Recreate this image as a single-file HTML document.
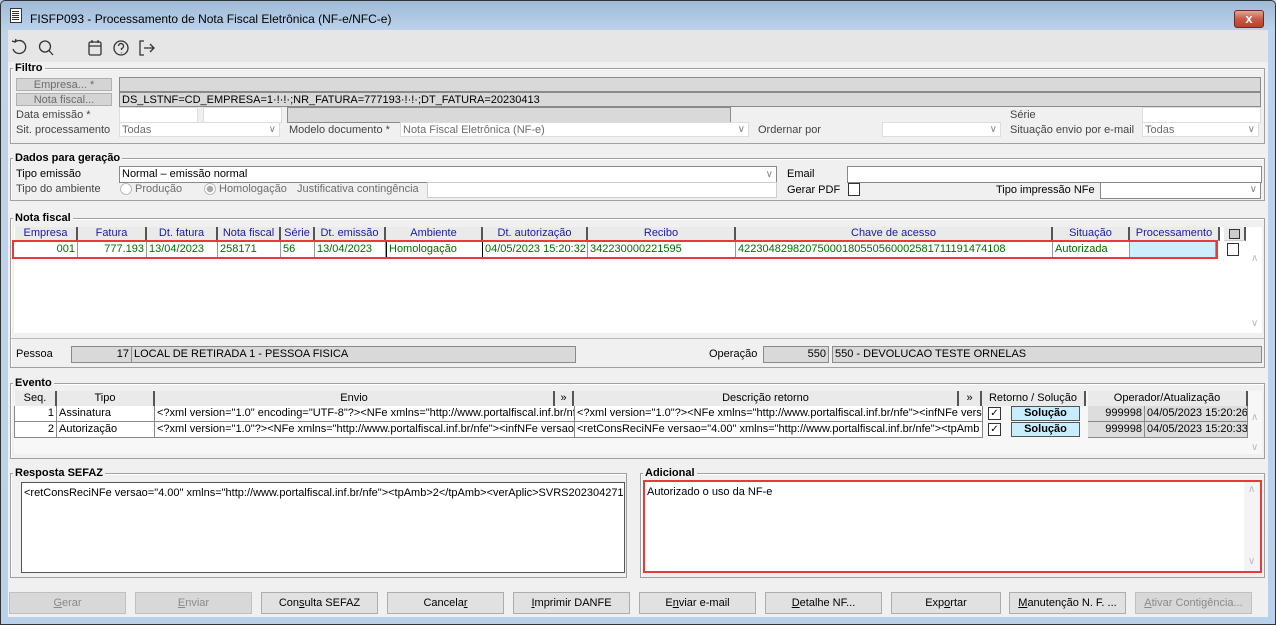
<!DOCTYPE html>
<html><head><meta charset="utf-8"><style>
*{box-sizing:border-box;margin:0;padding:0}
body{width:1276px;height:625px;position:relative;overflow:hidden;background:#b9d1ea;font-family:"Liberation Sans",Arial,sans-serif;font-size:11px;color:#000}
.a{position:absolute;white-space:nowrap;overflow:hidden}
.lbl{color:#444}
.dis{color:#6d6d6d}
.grp{position:absolute;border:1px solid #a0a0a0;box-shadow:inset 1px 1px 0 #fff}
.gt{position:absolute;font-weight:bold;background:#f0f0f0;padding:0 2px;line-height:12px}
.fld{position:absolute;border:1px solid #a0a0a0;background:#fff;line-height:14px;padding-left:2px;white-space:nowrap;overflow:hidden}
.gray{background:#d9d9d9;border-color:#8a8a8a}
.sel::after{content:"\2228";position:absolute;right:3px;top:0;color:#888;font-size:10px}
.btn{position:absolute;border:1px solid #adadad;background:#e1e1e1;text-align:center;line-height:20px;top:592px;height:22px;width:117px}
.btn.d{color:#8a8a8a;background:#d8d8d8;border-color:#c0c0c0}
.hd{position:absolute;background:#eaeaea;border-right:2px solid #555;border-bottom:1px solid #ccc;text-align:center;color:#1a1aa0;line-height:13px;height:14px;overflow:hidden}
.c{position:absolute;border-right:1px solid #999;border-bottom:1px solid #999;line-height:17px;height:17px;padding:0 2px;color:#007000;overflow:hidden;white-space:nowrap;background:#fff}
.eh{position:absolute;background:#eaeaea;border-right:2px solid #555;text-align:center;line-height:14px;height:15px;overflow:hidden;top:391px}
.ec{position:absolute;border-right:1px solid #888;border-bottom:1px solid #888;line-height:15px;height:16px;padding:0 2px;overflow:hidden;white-space:nowrap;background:#fff}
.sb{position:absolute;color:#bbb;font-size:10px}
</style></head><body>
<div class="a" style="left:0;top:0;width:1276px;height:625px;border:1px solid #333;border-radius:5px 5px 0 0;background:linear-gradient(#9fbbd9,#bcd3ea 30px,#b9d1ea)"></div>
<div class="a" style="left:10px;top:8px;width:12px;height:15px;border:1px solid #333;background:#fff"></div>
<div class="a" style="left:12px;top:11px;width:7px;height:9px;background:repeating-linear-gradient(#333 0 1px,#fff 1px 2px)"></div>
<div class="a" style="left:30px;top:12px;font-size:12px">FISFP093 - Processamento de Nota Fiscal Eletrônica (NF-e/NFC-e)</div>
<div class="a" style="left:1234px;top:10px;width:30px;height:18px;border:1px solid #6b2a22;border-radius:3px;background:linear-gradient(#e8a493,#c75a48 50%,#b8412f);color:#fff;font-weight:bold;text-align:center;line-height:16px;font-size:13px">x</div>
<div class="a" style="left:8px;top:30px;width:1260px;height:587px;background:#f0f0f0"></div>
<div class="a" style="left:8px;top:30px;width:1260px;height:32px;background:#e6e6e6"></div>
<svg class="a" style="left:10px;top:38px" width="150" height="20" viewBox="0 0 150 20" fill="none" stroke="#333" stroke-width="1.3">
<path d="M5 4 A6.5 6.5 0 1 1 3 11"/><path d="M2 3 L5 4 L6 1"/>
<circle cx="35" cy="8.5" r="5.5"/><path d="M39 12.5 L43 17"/>
<rect x="79" y="4" width="12" height="13" rx="1.5"/><path d="M79 8 H91 M82 2 V5 M88 2 V5"/>
<circle cx="111" cy="10" r="7"/><path d="M108.5 8 a2.5 2.5 0 1 1 3 2.5 v1.5 M111.5 14.5 v0.8"/>
<path d="M134 3 H130 V17 H134 M134 10 H144 M140 6 L144 10 L140 14"/>
</svg>
<div class="grp" style="left:10px;top:68px;width:1255px;height:76px"></div>
<div class="gt" style="left:13px;top:62px">Filtro</div>
<div class="a dis" style="left:16px;top:78px;width:96px;height:13px;background:#d4d4d4;border:1px solid #b0b0b0;text-align:center;line-height:12px">Empresa... *</div>
<div class="a dis" style="left:16px;top:93px;width:96px;height:13px;background:#d4d4d4;border:1px solid #b0b0b0;text-align:center;line-height:12px">Nota fiscal...</div>
<div class="fld gray" style="left:119px;top:77px;width:1142px;height:15px"></div>
<div class="fld gray" style="left:119px;top:92px;width:1142px;height:15px;line-height:15px">DS_LSTNF=CD_EMPRESA=1·!·!·;NR_FATURA=777193·!·!·;DT_FATURA=20230413</div>
<div class="a lbl" style="left:16px;top:109px">Data emissão *</div>
<div class="fld" style="left:119px;top:107px;width:79px;height:16px;border-color:#ddd"></div>
<div class="fld" style="left:203px;top:107px;width:79px;height:16px;border-color:#ddd"></div>
<div class="fld gray" style="left:287px;top:107px;width:444px;height:16px"></div>
<div class="a lbl" style="left:1010px;top:109px">Série</div>
<div class="fld" style="left:1142px;top:107px;width:119px;height:16px;border-color:#ddd"></div>
<div class="a lbl" style="left:16px;top:124px">Sit. processamento</div>
<div class="fld sel dis" style="left:119px;top:122px;width:161px;height:15px;border-color:#ddd">Todas</div>
<div class="a lbl" style="left:289px;top:124px">Modelo documento *</div>
<div class="fld sel dis" style="left:400px;top:122px;width:349px;height:15px;border-color:#ddd">Nota Fiscal Eletrônica (NF-e)</div>
<div class="a lbl" style="left:758px;top:124px">Ordernar por</div>
<div class="fld sel" style="left:882px;top:122px;width:119px;height:15px;border-color:#ddd"></div>
<div class="a lbl" style="left:1010px;top:124px">Situação envio por e-mail</div>
<div class="fld sel dis" style="left:1142px;top:122px;width:117px;height:15px;border-color:#ddd">Todas</div>
<div class="grp" style="left:10px;top:158px;width:1255px;height:43px"></div>
<div class="gt" style="left:13px;top:152px">Dados para geração</div>
<div class="a" style="left:16px;top:168px">Tipo emissão</div>
<div class="fld sel" style="left:119px;top:166px;width:658px;height:17px;border-color:#888;line-height:15px">Normal – emissão normal</div>
<div class="a" style="left:787px;top:168px">Email</div>
<div class="fld" style="left:847px;top:166px;width:415px;height:17px;border-color:#888"></div>
<div class="a lbl" style="left:16px;top:183px">Tipo do ambiente</div>
<div class="a" style="left:120px;top:183px;width:12px;height:12px;border:1px solid #bbb;border-radius:50%;background:#fff"></div>
<div class="a dis" style="left:135px;top:183px">Produção</div>
<div class="a" style="left:204px;top:183px;width:12px;height:12px;border:1px solid #bbb;border-radius:50%;background:radial-gradient(#aaa 0 3px,#fff 3.5px)"></div>
<div class="a dis" style="left:219px;top:183px">Homologação</div>
<div class="a dis" style="left:297px;top:183px">Justificativa contingência</div>
<div class="fld" style="left:427px;top:182px;width:350px;height:16px;border-color:#ccc"></div>
<div class="a" style="left:787px;top:184px">Gerar PDF</div>
<div class="a" style="left:848px;top:183px;width:12px;height:13px;border:1px solid #333;background:#fff"></div>
<div class="a" style="left:996px;top:184px">Tipo impressão NFe</div>
<div class="fld sel" style="left:1100px;top:182px;width:161px;height:17px;border-color:#888"></div>
<div class="grp" style="left:10px;top:218px;width:1255px;height:150px"></div>
<div class="gt" style="left:13px;top:212px">Nota fiscal</div>
<div class="a" style="left:14px;top:227px;width:1248px;height:106px;background:#fff"></div>
<div class="hd" style="left:15px;top:227px;width:63px">Empresa</div>
<div class="hd" style="left:78px;top:227px;width:69px">Fatura</div>
<div class="hd" style="left:147px;top:227px;width:71px">Dt. fatura</div>
<div class="hd" style="left:218px;top:227px;width:63px">Nota fiscal</div>
<div class="hd" style="left:281px;top:227px;width:34px">Série</div>
<div class="hd" style="left:315px;top:227px;width:71px">Dt. emissão</div>
<div class="hd" style="left:386px;top:227px;width:97px">Ambiente</div>
<div class="hd" style="left:483px;top:227px;width:105px">Dt. autorização</div>
<div class="hd" style="left:588px;top:227px;width:148px">Recibo</div>
<div class="hd" style="left:736px;top:227px;width:317px">Chave de acesso</div>
<div class="hd" style="left:1053px;top:227px;width:77px">Situação</div>
<div class="hd" style="left:1130px;top:227px;width:90px">Processamento</div>
<div class="hd" style="left:1224px;top:227px;width:22px"><span style="display:inline-block;width:11px;height:10px;border:1px solid #333;background:#ccc;margin-top:2px"></span></div>
<div class="c" style="left:15px;top:241px;width:63px;text-align:right">001</div>
<div class="c" style="left:78px;top:241px;width:69px;text-align:right">777.193</div>
<div class="c" style="left:147px;top:241px;width:71px">13/04/2023</div>
<div class="c" style="left:218px;top:241px;width:63px">258171</div>
<div class="c" style="left:281px;top:241px;width:34px">56</div>
<div class="c" style="left:315px;top:241px;width:71px">13/04/2023</div>
<div class="c" style="left:386px;top:241px;width:97px;border:1px solid #000;line-height:15px">Homologação</div>
<div class="c" style="left:483px;top:241px;width:105px">04/05/2023 15:20:32</div>
<div class="c" style="left:588px;top:241px;width:148px">342230000221595</div>
<div class="c" style="left:736px;top:241px;width:317px">42230482982075000180550560002581711191474108</div>
<div class="c" style="left:1053px;top:241px;width:77px">Autorizada</div>
<div class="c" style="left:1130px;top:241px;width:86px;background:#cceeff"></div>
<div class="a" style="left:12px;top:240px;width:1206px;height:19px;border:2px solid #e83a3a"></div>
<div class="a" style="left:1227px;top:243px;width:12px;height:13px;border:1px solid #333;background:#fff"></div>
<div class="sb" style="left:1251px;top:253px">&#8743;</div>
<div class="sb" style="left:1251px;top:318px">&#8744;</div>
<div class="a" style="left:11px;top:338px;width:1253px;height:1px;background:#bbb"></div>
<div class="a" style="left:16px;top:348px">Pessoa</div>
<div class="fld gray" style="left:71px;top:346px;width:61px;height:17px;text-align:right;padding-right:2px;line-height:15px">17</div>
<div class="fld gray" style="left:131px;top:346px;width:445px;height:17px;line-height:15px">LOCAL DE RETIRADA 1 - PESSOA FISICA</div>
<div class="a" style="left:709px;top:348px">Operação</div>
<div class="fld gray" style="left:763px;top:346px;width:66px;height:17px;text-align:right;padding-right:2px;line-height:15px">550</div>
<div class="fld gray" style="left:832px;top:346px;width:430px;height:17px;line-height:15px">550 - DEVOLUCAO TESTE ORNELAS</div>
<div class="grp" style="left:10px;top:383px;width:1255px;height:76px"></div>
<div class="gt" style="left:13px;top:377px">Evento</div>
<div class="a" style="left:14px;top:391px;width:1248px;height:63px;background:#f7f7f7"></div>
<div class="eh" style="left:15px;top:391px;width:42px">Seq.</div>
<div class="eh" style="left:57px;width:98px">Tipo</div>
<div class="eh" style="left:155px;width:400px">Envio</div>
<div class="eh" style="left:555px;width:19px">»</div>
<div class="eh" style="left:574px;width:385px">Descrição retorno</div>
<div class="eh" style="left:959px;width:23px">»</div>
<div class="eh" style="left:982px;width:104px">Retorno / Solução</div>
<div class="eh" style="left:1088px;width:160px">Operador/Atualização</div>
<div class="ec" style="left:14px;top:406px;width:43px;text-align:right;border-left:1px solid #888">1</div>
<div class="ec" style="left:57px;top:406px;width:98px">Assinatura</div>
<div class="ec" style="left:155px;top:406px;width:420px">&lt;?xml version="1.0" encoding="UTF-8"?&gt;&lt;NFe xmlns="http://www.portalfiscal.inf.br/nf</div>
<div class="ec" style="left:575px;top:406px;width:408px">&lt;?xml version="1.0"?&gt;&lt;NFe xmlns="http://www.portalfiscal.inf.br/nfe"&gt;&lt;infNFe vers</div>
<div class="ec" style="left:14px;top:422px;width:43px;text-align:right;border-left:1px solid #888">2</div>
<div class="ec" style="left:57px;top:422px;width:98px">Autorização</div>
<div class="ec" style="left:155px;top:422px;width:420px">&lt;?xml version="1.0"?&gt;&lt;NFe xmlns="http://www.portalfiscal.inf.br/nfe"&gt;&lt;infNFe versao</div>
<div class="ec" style="left:575px;top:422px;width:408px">&lt;retConsReciNFe versao="4.00" xmlns="http://www.portalfiscal.inf.br/nfe"&gt;&lt;tpAmb</div>
<div class="a" style="left:988px;top:407px;width:13px;height:13px;border:1px solid #333;background:#fff;font-size:10px;line-height:11px;text-align:center">✓</div>
<div class="a" style="left:988px;top:423px;width:13px;height:13px;border:1px solid #333;background:#fff;font-size:10px;line-height:11px;text-align:center">✓</div>
<div class="a" style="left:1011px;top:406px;width:69px;height:15px;background:#c8eefd;border:1px solid #555;font-weight:bold;text-align:center;line-height:13px">Solução</div>
<div class="a" style="left:1011px;top:422px;width:69px;height:15px;background:#c8eefd;border:1px solid #555;font-weight:bold;text-align:center;line-height:13px">Solução</div>
<div class="ec" style="left:1088px;top:406px;width:57px;text-align:right;background:#ddd">999998</div>
<div class="ec" style="left:1145px;top:406px;width:103px;background:#ddd">04/05/2023 15:20:26</div>
<div class="ec" style="left:1088px;top:422px;width:57px;text-align:right;background:#ddd">999998</div>
<div class="ec" style="left:1145px;top:422px;width:103px;background:#ddd">04/05/2023 15:20:33</div>
<div class="sb" style="left:1251px;top:412px">&#8743;</div>
<div class="sb" style="left:1251px;top:442px">&#8744;</div>
<div class="grp" style="left:10px;top:473px;width:617px;height:105px"></div>
<div class="gt" style="left:13px;top:467px">Resposta SEFAZ</div>
<div class="fld" style="left:21px;top:482px;width:604px;height:91px;border-color:#555;padding-top:3px">&lt;retConsReciNFe versao="4.00" xmlns="http://www.portalfiscal.inf.br/nfe"&gt;&lt;tpAmb&gt;2&lt;/tpAmb&gt;&lt;verAplic&gt;SVRS202304271</div>
<div class="grp" style="left:640px;top:473px;width:625px;height:105px"></div>
<div class="gt" style="left:643px;top:467px">Adicional</div>
<div class="fld" style="left:643px;top:480px;width:619px;height:93px;border:2px solid #e83a3a;padding-top:3px">Autorizado o uso da NF-e</div>
<div class="a" style="left:1244px;top:482px;width:16px;height:89px;background:#f4f4f4"></div>
<div class="sb" style="left:1248px;top:484px">&#8743;</div>
<div class="sb" style="left:1248px;top:556px">&#8744;</div>
<div class="btn d" style="left:9px"><u>G</u>erar</div>
<div class="btn d" style="left:135px"><u>E</u>nviar</div>
<div class="btn" style="left:261px">Con<u>s</u>ulta SEFAZ</div>
<div class="btn" style="left:387px">Cancela<u>r</u></div>
<div class="btn" style="left:513px"><u>I</u>mprimir DANFE</div>
<div class="btn" style="left:639px">E<u>n</u>viar e-mail</div>
<div class="btn" style="left:765px"><u>D</u>etalhe NF...</div>
<div class="btn" style="left:891px;width:110px">Exp<u>o</u>rtar</div>
<div class="btn" style="left:1009px"><u>M</u>anutenção N. F. ...</div>
<div class="btn d" style="left:1135px"><u>A</u>tivar Contigência...</div>
</body></html>
